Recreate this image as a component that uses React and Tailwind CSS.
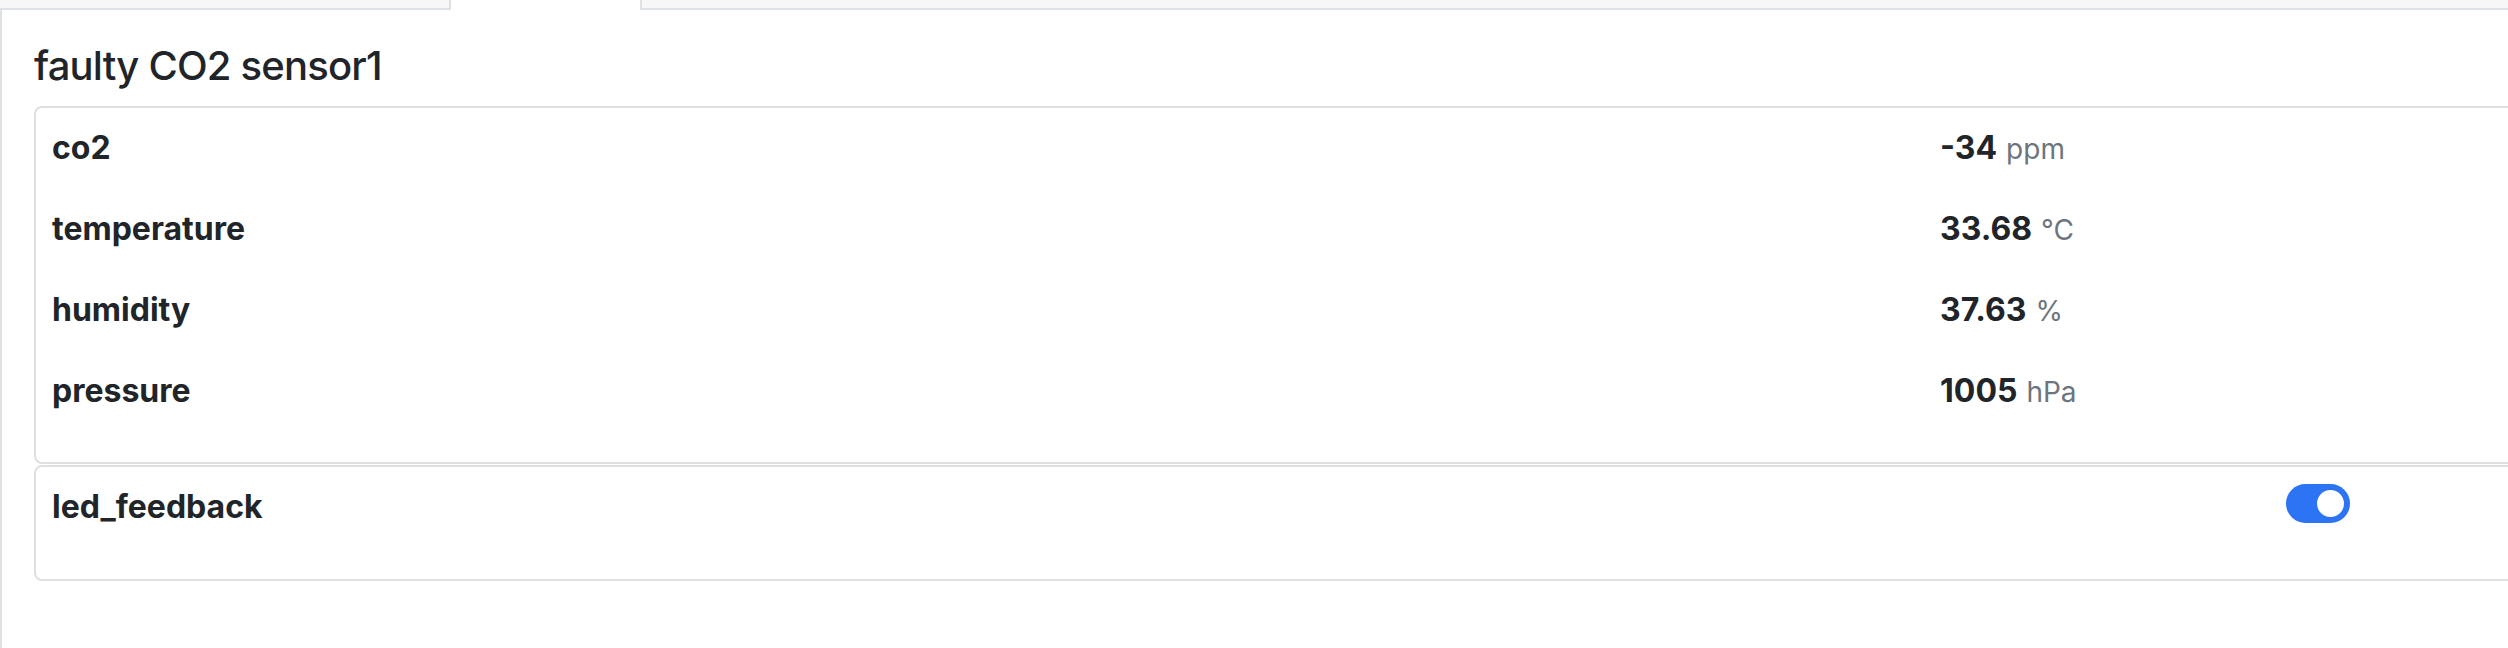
import { useState } from 'react'

const readings = [
  { name: 'co2', value: '-34', unit: 'ppm' },
  { name: 'temperature', value: '33.68', unit: '°C' },
  { name: 'humidity', value: '37.63', unit: '%' },
  { name: 'pressure', value: '1005', unit: 'hPa' },
]

function Toggle({ on, onChange }) {
  return (
    <button
      type="button"
      onClick={() => onChange(!on)}
      className={`mt-px flex h-[39px] w-16 items-center rounded-full px-[6px] ${
        on ? 'justify-end bg-[#2d74f4]' : 'justify-start bg-[#c8ccd0]'
      }`}
    >
      <span className="h-[27px] w-[27px] rounded-full bg-white" />
    </button>
  )
}

export default function App() {
  const [led, setLed] = useState(true)

  return (
    <div className="h-[648px] w-full overflow-hidden bg-white font-['Inter',sans-serif] text-[#212529]">
      {/* tabs, only their lower edge shows */}
      <div className="flex h-[10px]">
        <div className="w-[451px] border-r-2 border-b-2 border-[#dee2e6] bg-[#f7f7f7]" />
        <div className="w-[189px] bg-white" />
        <div className="flex-1 border-b-2 border-l-2 border-[#dee2e6] bg-[#f7f7f7]" />
      </div>

      <div className="h-full border-l-2 border-[#dee2e6] pt-8 pl-8">
        <h5 className="mb-4 text-[40px] leading-[48px] font-medium tracking-[-0.8px]">faulty CO2 sensor1</h5>

        <div className="-mr-5 rounded-[8px] border-2 border-[#dfdfdf] px-4 pt-4 pb-[14px]">
          {readings.map((r) => (
            <div key={r.name} className="mb-8 grid grid-cols-[1888px_1fr] text-[32px] leading-[48px]">
              <span className="font-bold">{r.name}</span>
              <span>
                <strong className="font-bold">{r.value}</strong>{' '}
                <small className="text-[28px] text-[#6c757d]">{r.unit}</small>
              </span>
            </div>
          ))}
        </div>

        <div className="-mr-5 mt-px rounded-[8px] border-2 border-[#dfdfdf] p-4">
          <div className="mb-8 grid grid-cols-[2234px_1fr] items-start text-[32px] leading-[48px]">
            <span className="font-bold">led_feedback</span>
            <Toggle on={led} onChange={setLed} />
          </div>
        </div>
      </div>
    </div>
  )
}
